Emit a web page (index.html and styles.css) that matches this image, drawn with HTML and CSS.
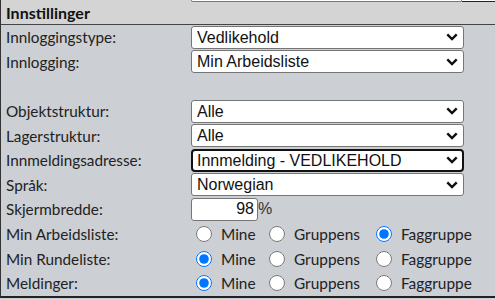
FILE: index.html
```html
<!DOCTYPE html>
<html lang="no">
<head>
  <meta charset="UTF-8">
  <meta name="viewport" content="width=device-width, initial-scale=1.0">
  <title>Innstillinger</title>
  <link rel="stylesheet" href="styles.css">
</head>
<body>
  <div class="forrige">
    <div class="f-venstre"></div>
    <div class="f-boks"></div>
    <div class="f-hoyre"></div>
  </div>

  <div class="panel">
    <div class="tittel">Innstillinger</div>

    <div class="skjema">
      <div class="etikett">Innloggingstype:</div>
      <div class="felt">
        <select><option>Vedlikehold</option></select>
      </div>

      <div class="etikett">Innlogging:</div>
      <div class="felt">
        <select><option>Min Arbeidsliste</option></select>
      </div>

      <div class="etikett"></div>
      <div class="felt"></div>

      <div class="etikett">Objektstruktur:</div>
      <div class="felt">
        <select><option>Alle</option></select>
      </div>

      <div class="etikett">Lagerstruktur:</div>
      <div class="felt">
        <select><option>Alle</option></select>
      </div>

      <div class="etikett">Innmeldingsadresse:</div>
      <div class="felt">
        <select class="aktiv"><option>Innmelding - VEDLIKEHOLD</option></select>
      </div>

      <div class="etikett">Språk:</div>
      <div class="felt">
        <select><option>Norwegian</option></select>
      </div>

      <div class="etikett">Skjermbredde:</div>
      <div class="felt">
        <input type="text" class="bredde" value="98"><span class="prosent">%</span>
      </div>

      <div class="etikett">Min Arbeidsliste:</div>
      <div class="felt valg">
        <label><input type="radio" name="arbeid"> Mine</label>
        <label><input type="radio" name="arbeid"> Gruppens</label>
        <label><input type="radio" name="arbeid" checked> Faggruppe</label>
      </div>

      <div class="etikett">Min Rundeliste:</div>
      <div class="felt valg">
        <label><input type="radio" name="runde" checked> Mine</label>
        <label><input type="radio" name="runde"> Gruppens</label>
        <label><input type="radio" name="runde"> Faggruppe</label>
      </div>

      <div class="etikett">Meldinger:</div>
      <div class="felt valg">
        <label><input type="radio" name="meld" checked> Mine</label>
        <label><input type="radio" name="meld"> Gruppens</label>
        <label><input type="radio" name="meld"> Faggruppe</label>
      </div>
    </div>
  </div>
</body>
</html>
```

FILE: styles.css
```css
body {
  margin: 0;
  font-family: Lato, "Open Sans", sans-serif;
  color: #222;
  background-color: #cccfd4;
}

.forrige {
  display: grid;
  grid-template-columns: 191px 271px 1fr;
  height: 2px;
}
.f-venstre {
  background-color: #d4d4d4;
  border-left: 1px solid #333;
}
.f-boks {
  background-color: #fff;
  border: 1px solid #777;
  border-top: none;
  box-sizing: border-box;
  border-radius: 0 0 3px 3px;
}
.f-hoyre {
  background-color: #fff;
  border-bottom: 1px solid #222;
  box-sizing: border-box;
}

.panel {
  border-left: 1px solid #333;
  border-bottom: 2px solid #222;
}

.tittel {
  background-color: #d4d4d4;
  border-bottom: 1px solid #444;
  height: 22px;
  line-height: 21px;
  padding-left: 5px;
  font-weight: bold;
  font-size: 16px;
  color: #111;
}

.skjema {
  display: grid;
  grid-template-columns: 190px 1fr;
  grid-auto-rows: 24.6px;
}

.etikett {
  padding-left: 5px;
  font-size: 15.3px;
  display: flex;
  align-items: center;
}

.felt {
  display: flex;
  align-items: center;
}

select {
  appearance: none;
  -webkit-appearance: none;
  width: 273px;
  height: 23px;
  margin: 0;
  padding: 0 0 0 5px;
  border: 1px solid #767676;
  border-radius: 3px;
  background-color: #fff;
  background-image: url("data:image/svg+xml,%3Csvg xmlns='http://www.w3.org/2000/svg' width='12' height='8' viewBox='0 0 12 8'%3E%3Cpath d='M1.3 1.4 L6 6 L10.7 1.4' fill='none' stroke='%23111' stroke-width='2.4'/%3E%3C/svg%3E");
  background-repeat: no-repeat;
  background-position: right 5px center;
  font-family: "Liberation Sans", Arial, sans-serif;
  font-size: 16px;
  color: #111;
}

select.aktiv {
  border: 2px solid #111;
  border-radius: 4px;
  padding-left: 4px;
  background-position: right 4px center;
}

.bredde {
  width: 67px;
  height: 23px;
  box-sizing: border-box;
  margin: 0;
  padding: 0 3px 0 0;
  border: 1px solid #767676;
  border-radius: 3px;
  text-align: right;
  font-family: "Liberation Sans", Arial, sans-serif;
  font-size: 16px;
  color: #111;
}

.prosent {
  font-family: "Liberation Sans", Arial, sans-serif;
  font-size: 16px;
  color: #333;
}

.valg {
  display: grid;
  grid-template-columns: 73px 107px auto;
  padding-left: 5px;
}

.valg label {
  display: flex;
  align-items: center;
  gap: 9px;
  font-size: 15.4px;
}

.valg input {
  width: 16px;
  height: 16px;
  margin: 0;
}
```
